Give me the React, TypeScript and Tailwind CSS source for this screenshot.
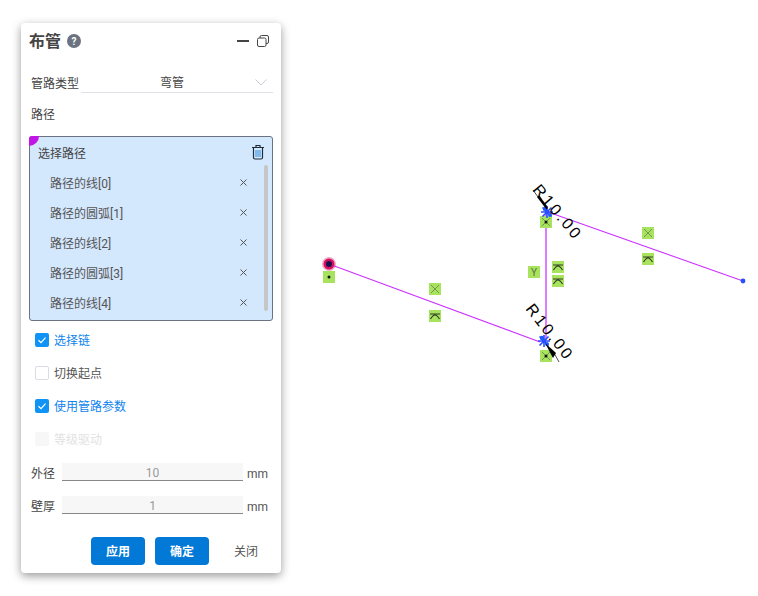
import React from 'react';

const font = { fontFamily: 'Roboto, "Noto Sans CJK SC", sans-serif' };

const pathItems = ['路径的线[0]', '路径的圆弧[1]', '路径的线[2]', '路径的圆弧[3]', '路径的线[4]'];

const CheckRow = ({ label, state }: { label: string; state: 'on' | 'off' | 'disabled' }) => (
  <div className="flex h-[33px] items-center pl-[14px]">
    {state === 'on' && (
      <span className="flex h-[14px] w-[14px] items-center justify-center rounded-[2px] bg-[#0f94f5]">
        <svg width="10" height="10" viewBox="0 0 10 10" fill="none" stroke="white" strokeWidth="1.2">
          <path d="M1.5 5.2 L4 7.6 L8.5 2.6" />
        </svg>
      </span>
    )}
    {state === 'off' && <span className="h-[14px] w-[14px] rounded-[2px] border border-[#d9dce3] bg-white" />}
    {state === 'disabled' && <span className="h-[14px] w-[14px] rounded-[2px] bg-[#f7f7f7]" />}
    <span
      className={
        'ml-[5px] pt-[3px] text-[12px] ' +
        (state === 'on' ? 'text-[#0f84ee]' : state === 'off' ? 'text-[#555555]' : 'text-[#e2e2e2]')
      }
    >
      {label}
    </span>
  </div>
);

const ParamRow = ({ label, value }: { label: string; value: string }) => (
  <div className="flex h-[18px] items-center pl-[10px]">
    <span className="w-[31px] pt-[3px] text-[12px] text-[#444444]">{label}</span>
    <div className="flex h-[18px] w-[181px] items-center justify-center border-b border-[#888888] bg-[#f7f7f7] pt-[2px] text-[12px] text-[#999999]">
      {value}
    </div>
    <span className="ml-[4px] pt-[3px] text-[12px] text-[#555555]">mm</span>
  </div>
);

// small green marker used for the sketch constraints
const Badge = ({ x, y, kind }: { x: number; y: number; kind: 'cross' | 'tangent' | 'dot' | 'crossdot' | 'y' }) => (
  <g transform={`translate(${x} ${y})`}>
    <rect x="-6" y="-6" width="12" height="12" fill="#a8e35e" />
    {(kind === 'cross' || kind === 'crossdot') && (
      <path d="M-4 -4 L4 4 M4 -4 L-4 4" stroke="#6a7d52" strokeWidth="0.8" fill="none" />
    )}
    {kind === 'tangent' && (
      <path d="M-5 -2 H5 M-4.5 3 Q-2 -1 0 -1 Q2 -1 4.5 3" stroke="#2f3a26" strokeWidth="1.2" fill="none" />
    )}
    {(kind === 'dot' || kind === 'crossdot') && <circle cx="0" cy="0" r="1.5" fill="#111111" />}
    {kind === 'y' && (
      <text x="0" y="3.5" textAnchor="middle" fontSize="10" fill="#5a7040" fontFamily="Roboto, sans-serif">
        Y
      </text>
    )}
  </g>
);

const Star = ({ x, y }: { x: number; y: number }) => (
  <g transform={`translate(${x} ${y})`}>
    <path d="M-6 0 H6 M0 -6 V6 M-4.5 -4.5 L4.5 4.5 M4.5 -4.5 L-4.5 4.5" stroke="#2a4dff" strokeWidth="1.6" fill="none" />
    <circle cx="-2" cy="-3" r="2.2" fill="#1f5dff" />
    <circle cx="3" cy="3" r="2" fill="#1f5dff" />
  </g>
);

const Sketch = () => (
  <svg className="absolute inset-0" width="758" height="596" viewBox="0 0 758 596">
    <g stroke="#cc33ff" fill="none">
      <path d="M329 264 L540 342" strokeWidth="1.1" />
      <path d="M546 213 L546 340" strokeWidth="1.6" strokeOpacity="0.8" />
      <path d="M548 212 L743 281" strokeWidth="1.1" />
    </g>
    <circle cx="329" cy="264" r="7" fill="#d9105f" fillOpacity="0.35" />
    <circle cx="329" cy="264" r="5.5" fill="#d9105f" />
    <circle cx="329" cy="264" r="3" fill="#16104f" />
    <circle cx="743" cy="281" r="2.4" fill="#2a4dff" />

    <Badge x={329} y={277} kind="dot" />
    <Badge x={435} y={289} kind="cross" />
    <Badge x={435} y={316} kind="tangent" />
    <Badge x={648} y={233} kind="cross" />
    <Badge x={648} y={259} kind="tangent" />
    <Badge x={534} y={272} kind="y" />
    <Badge x={558} y={267} kind="tangent" />
    <Badge x={558} y={281} kind="tangent" />
    <Badge x={546} y={222} kind="crossdot" />
    <Badge x={546} y={356} kind="crossdot" />

    <Star x={547} y={212} />
    <Star x={544} y={341} />

    <path d="M533 190 L538 197" stroke="#222222" strokeWidth="0.8" />
    <path d="M537 197 L539.5 195.5 L548 208 L546.5 209.5 Z" fill="#000000" />
    <path d="M554 353 L559 362" stroke="#222222" strokeWidth="0.8" />
    <path d="M545 343 L556 353 L553 358 Z" fill="#000000" />

    <text
      transform="translate(532 190) rotate(50)"
      fontSize="16"
      letterSpacing="2.6"
      fill="#000000"
      fontFamily="Liberation Sans, sans-serif"
    >
      R10.00
    </text>
    <text
      transform="translate(525 309) rotate(52)"
      fontSize="16"
      letterSpacing="2.6"
      fill="#000000"
      fontFamily="Liberation Sans, sans-serif"
    >
      R10.00
    </text>
  </svg>
);

export default function App() {
  return (
    <div className="relative h-[596px] w-[758px] overflow-hidden bg-white pl-[21px] pt-[23px]" style={font}>
      <Sketch />

      {/* Panel */}
      <div className="relative h-[550px] w-[260px] rounded-[4px] bg-white shadow-[0_3px_10px_rgba(0,0,0,0.4)]">
        {/* Header */}
        <div className="flex h-[36px] items-center pl-[8px] pr-[12px]">
          <span className="pt-[1px] text-[16px] font-bold text-[#444444]">布管</span>
          <span className="ml-[6px] flex h-[14px] w-[14px] items-center justify-center rounded-full bg-[#6b7280] text-[10px] font-bold text-white">
            ?
          </span>
          <div className="ml-auto flex items-center gap-[8px]">
            <span className="h-[2px] w-[12px] bg-[#444444]" />
            <svg width="12" height="12" viewBox="0 0 12 12" fill="none" stroke="#444444" strokeWidth="1">
              <rect x="0.5" y="3" width="8.5" height="8.5" rx="1.5" />
              <path d="M3 3 V2 Q3 0.5 4.5 0.5 H10 Q11.5 0.5 11.5 2 V7 Q11.5 8.5 10 8.5 H9" />
            </svg>
          </div>
        </div>

        {/* Pipe type select */}
        <div className="mt-[13px] flex h-[21px] items-center pl-[10px] pr-[8px]">
          <span className="w-[50px] pt-[2px] text-[12px] text-[#444444]">管路类型</span>
          <div className="flex h-[21px] flex-1 items-center border-b border-[#dfe1e6] pl-[79px] pr-[6px]">
            <span className="pt-[2px] text-[12px] text-[#444444]">弯管</span>
            <svg className="ml-auto" width="12" height="7" viewBox="0 0 12 7" fill="none" stroke="#c9ccd3">
              <path d="M0.5 0.5 L6 6 L11.5 0.5" />
            </svg>
          </div>
        </div>

        <div className="mt-[13px] pl-[10px] text-[12px] leading-[18px] text-[#444444]">路径</div>

        {/* Path list */}
        <div className="relative ml-[8px] mt-[12px] h-[185px] w-[244px] rounded-[3px] border border-[#6b7280] bg-[#d3e7fd]">
          <span className="absolute -left-px -top-px h-[10px] w-[10px] rounded-br-[10px] rounded-tl-[3px] bg-[#c314e8]" />
          <div className="flex h-[30px] items-center pl-[8px] pr-[7px]">
            <span className="pt-[3px] text-[12px] text-[#444444]">选择路径</span>
            <svg className="ml-auto" width="14" height="16" viewBox="0 0 14 16" fill="none">
              <path d="M1 3.5 H13 M5 3.5 V1.5 H9 V3.5" stroke="#1f2d3d" strokeWidth="1.2" />
              <path d="M2.5 3.5 V13.5 Q2.5 15 4 15 H10 Q11.5 15 11.5 13.5 V3.5" stroke="#1f2d3d" strokeWidth="1.2" />
              <path d="M5 6 V13 M7 6 V13 M9 6 V13" stroke="#2a8fd8" strokeWidth="1" />
            </svg>
          </div>
          {pathItems.map((item) => (
            <div key={item} className="flex h-[30px] items-center pl-[20px]">
              <span className="w-[190px] pt-[3px] text-[12px] text-[#555555]">{item}</span>
              <svg width="7" height="7" viewBox="0 0 7 7" stroke="#555555" strokeWidth="1">
                <path d="M0.5 0.5 L6.5 6.5 M6.5 0.5 L0.5 6.5" />
              </svg>
            </div>
          ))}
          <span className="absolute right-[4px] top-[28px] h-[146px] w-[4px] rounded-[2px] bg-[#c6c6c6]" />
        </div>

        {/* Options */}
        <div className="mt-[2px]">
          <CheckRow label="选择链" state="on" />
          <CheckRow label="切换起点" state="off" />
          <CheckRow label="使用管路参数" state="on" />
          <CheckRow label="等级驱动" state="disabled" />
        </div>

        <div className="mt-[8px] flex flex-col gap-[15px]">
          <ParamRow label="外径" value="10" />
          <ParamRow label="壁厚" value="1" />
        </div>

        {/* Footer */}
        <div className="mt-[23px] flex items-center pl-[70px]">
          <button className="h-[28px] w-[54px] rounded-[4px] bg-[#0279d7] pt-[1px] text-[12px] font-bold text-white">应用</button>
          <button className="ml-[10px] h-[28px] w-[54px] rounded-[4px] bg-[#0279d7] pt-[1px] text-[12px] font-bold text-white">确定</button>
          <button className="ml-[10px] h-[28px] w-[54px] pt-[1px] text-[12px] text-[#555555]">关闭</button>
        </div>
      </div>
    </div>
  );
}
